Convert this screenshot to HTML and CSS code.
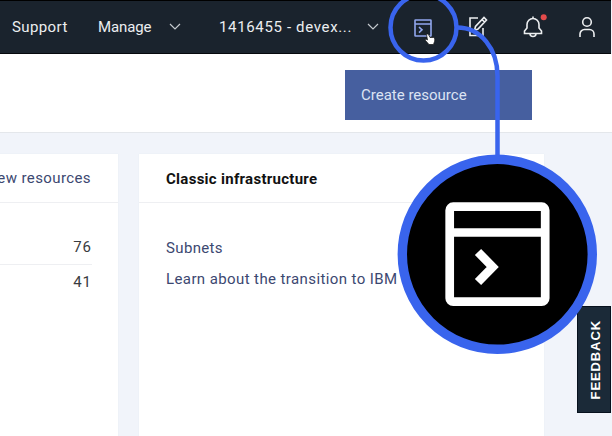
FILE: index.html
```html
<!DOCTYPE html>
<html lang="en">
<head>
<meta charset="utf-8">
<title>Dashboard</title>
<link rel="stylesheet" href="styles.css">
</head>
<body>
<div class="page">
  <header class="topbar">
    <nav class="menu">
      <span class="item support">Support</span>
      <span class="item manage">Manage</span>
      <svg class="caret" width="12" height="8" viewBox="0 0 12 8"><path d="M1 1l5 5 5-5"/></svg>
      <span class="item account">1416455 - devex...</span>
      <svg class="caret account-caret" width="12" height="8" viewBox="0 0 12 8"><path d="M1 1l5 5 5-5"/></svg>
    </nav>
    <div class="actions">
      <svg class="shell" width="18" height="18" viewBox="0 0 18 18"><rect x="1" y="1" width="16" height="16" rx=".5"/><path d="M1 5h16M5 8l3 2.800-3 2.800"/></svg>
      <svg class="edit" width="20" height="22" viewBox="0 0 20 22"><path d="M10 2H2v17.500h13V12M6.500 14.500l1-4L16 1.500l2.500 2.500L10 13zM14 3.500l2.500 2.500"/></svg>
      <svg class="bell" width="20" height="24" viewBox="0 0 20 24"><path d="M10 1.500v2.500M1.500 18.500v-2.500l2.500-3V9.500a6 6 0 0 1 12 0v3.500l2.500 3v2.500zM7 18.500a3 3 0 0 0 6 0"/></svg>
      <svg class="user" width="16" height="22" viewBox="0 0 16 22"><circle cx="8" cy="6" r="4.300"/><path d="M1 21v-3a4.500 4.500 0 0 1 4.500-4.500h5a4.500 4.500 0 0 1 4.500 4.500V21"/></svg>
    </div>
  </header>
  <section class="toolbar"><button class="create">Create resource</button></section>
  <main class="cards">
    <section class="card resources">
      <h2 class="link"><span>View resources</span></h2>
      <ul>
        <li>76</li>
        <li>41</li>
      </ul>
    </section>
    <section class="card classic">
      <h2><span>Classic infrastructure</span></h2>
      <div class="links">
        <a class="subnets">Subnets</a>
        <a class="learn">Learn about the transition to IBM</a>
      </div>
    </section>
  </main>
  <aside class="feedback"><span>FEEDBACK</span></aside>
  <svg class="callout" width="612" height="436" viewBox="0 0 612 436">
    <circle class="ring" cx="423.500" cy="27.500" r="33"/>
    <path class="ring" d="M457 27.500C481 27.500 497.500 49 497.500 76V157"/>
    <circle class="lens" cx="497.300" cy="254.300" r="95"/>
    <rect class="glyph" x="449.700" y="206.700" width="95.500" height="95" rx="3.500"/>
    <path class="glyph" d="M450 232.500h95M478 252l14.700 15-14.700 15"/>
    <circle class="dot" cx="543.700" cy="17.200" r="3"/>
    <path class="hand" d="M426.500 34.500c1-1 2 0 2.500 1l1 2 3.500 0c1.500.5 1.500 2 1 4l-1 3h-4.500l-3.500-4c-.5-1.500 1-1.500 2-.5z"/>
  </svg>
</div>
</body>
</html>
```

FILE: styles.css
```css
* { box-sizing: border-box; }
body { margin: 0; font: 15px/20px Roboto, "Noto Sans", sans-serif; }
.page { position: relative; width: 612px; height: 436px; overflow: hidden; background: #f1f4fa; }
.topbar { display: flex; justify-content: space-between; width: 611px; height: 54px; background: #1a232d; border-top: 1px solid #000; border-bottom: 1px solid #05080c; }
.menu { display: flex; align-items: center; padding-left: 12px; color: #eceef0; }
.item { white-space: nowrap; }
.support { width: 86px; letter-spacing: .4px; }
.manage { width: 71px; letter-spacing: -.1px; }
.account { width: 148px; margin-left: 38px; letter-spacing: .65px; }
svg { display: block; fill: none; flex: none; }
.caret { stroke: #c5cacf; stroke-width: 1.2; }
.actions { display: flex; align-items: center; padding-right: 16px; stroke: #eceef0; stroke-width: 1.6; }
.shell { stroke: #91a7ee; margin: 2px 36px 0 0; }
.edit { margin-right: 35px; }
.bell { margin-right: 36px; }
.toolbar { height: 79px; display: flex; justify-content: flex-end; align-items: flex-start; padding: 16px 80px 0 0; background: #fff; border-bottom: 1px solid #e4e7eb; }
.create { width: 187px; height: 50px; padding: 0 0 0 16px; border: 0; background: #465f9f; color: #dce3f3; font: inherit; letter-spacing: 0; text-align: left; }
.cards { display: flex; gap: 21px; padding-top: 21px; height: 303px; }
.card { background: #fff; box-shadow: 0 0 1px #dfe3ed; }
.card h2 { height: 49px; margin: 0; border-bottom: 1px solid #eeeff2; font-size: 15px; line-height: 49px; }
.resources { width: 118px; }
.resources h2 { display: flex; justify-content: flex-end; padding-right: 27px; white-space: nowrap; font-weight: 400; color: #3c4871; letter-spacing: .4px; }
.resources ul { margin: 27px 26px 0 0; padding: 0; list-style: none; text-align: right; color: #393b40; letter-spacing: 1px; }
.resources li { height: 35px; line-height: 35px; border-bottom: 1px solid #eeeff2; }
.resources li:last-child { border: 0; }
.classic { width: 405px; }
.classic h2 { padding-left: 27px; color: #111; letter-spacing: .28px; line-height: 50px; }
.links { display: flex; flex-direction: column; gap: 11px; padding: 35px 0 0 27px; color: #3c4871; white-space: nowrap; }
.subnets { letter-spacing: .35px; }
.learn { letter-spacing: .4px; }
.feedback { position: absolute; left: 577px; top: 306px; width: 34px; height: 107px; display: flex; align-items: center; justify-content: center; padding-left: 3px; background: #1b2a38; border: 1px solid #07111d; color: #fff; font: bold 13px/16px "Liberation Sans", sans-serif; letter-spacing: .9px; }
.feedback span { writing-mode: vertical-rl; transform: rotate(180deg); }
.callout { position: absolute; left: 0; top: 0; }
.ring { stroke: #3964ed; stroke-width: 4.500; }
.lens { fill: #000; stroke: #3964ed; stroke-width: 9.400; }
.glyph { stroke: #fff; stroke-width: 8.700; }
.dot { fill: #e34b4b; }
.hand { fill: #fff; stroke: #111; stroke-width: .7; }
```
